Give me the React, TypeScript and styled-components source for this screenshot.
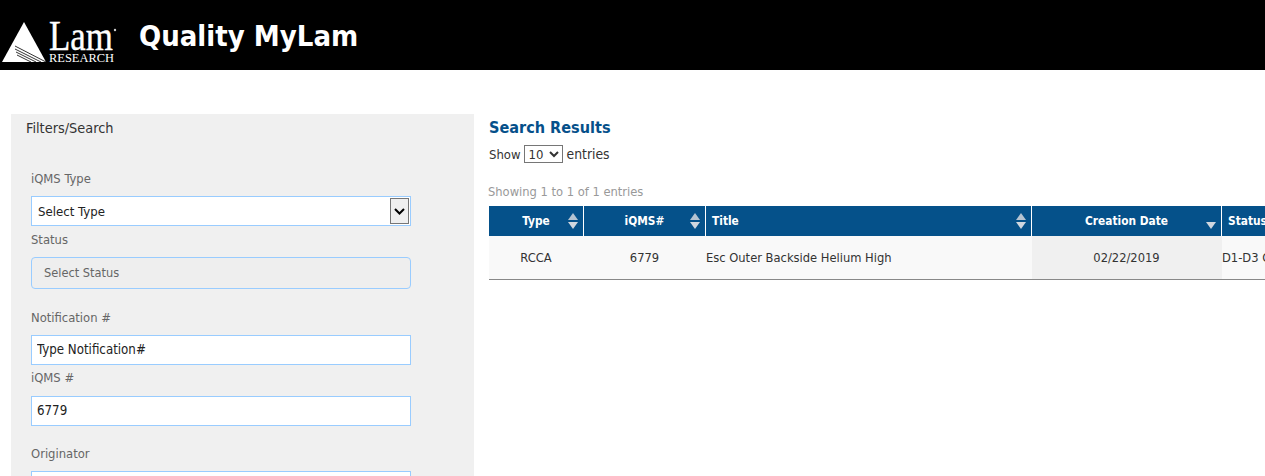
import React from 'react';
import styled, { createGlobalStyle } from 'styled-components';

const FONT = '"DejaVu Sans Condensed", "DejaVu Sans", sans-serif';

const GlobalStyle = createGlobalStyle`
  html, body {
    margin: 0;
    padding: 0;
    background: #fff;
    overflow: hidden;
    font-family: ${FONT};
  }
`;

const Page = styled.div`
  width: 1265px;
  height: 476px;
  overflow: hidden;
`;

const Header = styled.header`
  height: 70px;
  background: #000;
  display: flex;
  align-items: flex-start;
`;

const Logo = styled.svg`
  width: 118px;
  height: 70px;
  flex: none;
`;

const AppTitle = styled.h1`
  margin: 18px 0 0 21px;
  font-size: 29px;
  line-height: 36px;
  font-weight: 700;
  color: #fff;
  white-space: nowrap;
`;

const Main = styled.main`
  display: flex;
  align-items: flex-start;
  padding: 44px 0 0 11px;
`;

const Sidebar = styled.aside`
  width: 463px;
  height: 362px;
  flex: none;
  background: #f0f0f0;
  padding: 6px 0 0 20px;
  box-sizing: border-box;
`;

const SidebarTitle = styled.div`
  margin-left: -5px;
  font-size: 14.4px;
  line-height: 16px;
  color: #333;
  margin-bottom: 35px;
`;

const Label = styled.label<{ $top?: number }>`
  display: block;
  margin-top: ${(p) => p.$top ?? 0}px;
  font-size: 12.9px;
  line-height: 16px;
  color: #666;
`;

const fieldBorder = '1px solid #99ccff';

const SelectBox = styled.div`
  width: 380px;
  height: 30px;
  margin-top: 9px;
  box-sizing: border-box;
  border: ${fieldBorder};
  background: #fff;
  display: flex;
  align-items: center;
  justify-content: space-between;
  padding: 0 1px 0 6px;
  font-size: 13.1px;
  color: #222;
`;

const ArrowButton = styled.span`
  width: 19px;
  height: 26px;
  box-sizing: border-box;
  border: 1px solid #767676;
  background: #efefef;
  display: flex;
  align-items: center;
  justify-content: center;
`;

const DisabledBox = styled.div`
  width: 380px;
  height: 32px;
  margin-top: 9px;
  box-sizing: border-box;
  border: ${fieldBorder};
  border-radius: 4px;
  background: #eee;
  padding: 0 0 2px 12px;
  display: flex;
  align-items: center;
  font-size: 12.7px;
  color: #666;
`;

const TextField = styled.input<{ $top?: number }>`
  display: block;
  width: 380px;
  height: 30px;
  margin-top: ${(p) => p.$top ?? 10}px;
  box-sizing: border-box;
  border: ${fieldBorder};
  border-radius: 0;
  outline: none;
  background: #fff;
  padding: 0 5px 2px;
  font-family: ${FONT};
  font-size: 13.2px;
  color: #222;
`;

const Results = styled.section`
  margin-left: 15px;
  flex: none;
  width: 900px;
`;

const ResultsTitle = styled.h2`
  margin: 4px 0 0;
  font-size: 16.1px;
  line-height: 20px;
  font-weight: 700;
  color: #05508a;
`;

const EntriesRow = styled.div`
  margin-top: 7px;
  height: 18px;
  display: flex;
  align-items: center;
  gap: 3px;
  font-size: 13px;
  color: #333;
`;

const EntriesSelect = styled.select`
  width: 39px;
  height: 18px;
  margin-right: 1px;
  box-sizing: border-box;
  padding: 0;
  border: 1px solid #767676;
  background: #fff;
  font-family: ${FONT};
  font-size: 13px;
  color: #333;
`;

const EntriesWord = styled.span`
  font-size: 13.8px;
`;

const Info = styled.div`
  margin-top: 21px;
  margin-left: -1px;
  font-size: 12.8px;
  line-height: 16px;
  color: #999;
`;

const Table = styled.div`
  margin-top: 6px;
  display: grid;
  grid-template-columns: 94px 1px 121px 1px 325px 1px 189px 1px 200px;
`;

const HeadCell = styled.div<{ $align?: string }>`
  height: 30px;
  background: #05518a;
  color: #fff;
  font-size: 11.8px;
  font-weight: 700;
  display: flex;
  align-items: center;
  position: relative;
  justify-content: ${(p) => p.$align ?? 'center'};
  padding-left: ${(p) => (p.$align ? '6px' : '0')};
  box-sizing: border-box;
`;

const HeadGap = styled.div`
  background: #fff;
`;

const SortIcon = styled.svg`
  position: absolute;
  right: 5px;
  top: 7px;
  width: 10px;
  height: 16px;
`;

const BodyCell = styled.div<{ $align?: string; $sorted?: boolean }>`
  height: 44px;
  box-sizing: border-box;
  border-bottom: 1px solid #888;
  background: ${(p) => (p.$sorted ? '#f0f0f0' : '#f9f9f9')};
  font-size: 12.8px;
  color: #333;
  display: flex;
  align-items: center;
  justify-content: ${(p) => p.$align ?? 'center'};
  white-space: nowrap;
  overflow: hidden;
`;

function LamLogo() {
  return (
    <Logo viewBox="0 0 118 70">
      <polygon points="24,22 46,62 2,62" fill="#fff" />
      <g stroke="#000" strokeWidth="0.8">
        <line x1="15" y1="46" x2="46" y2="62" />
        <line x1="15" y1="49" x2="41" y2="62" />
        <line x1="16" y1="52" x2="36" y2="62" />
        <line x1="17" y1="55" x2="31" y2="62" />
      </g>
      <text
        x="49"
        y="50"
        fill="#fff"
        stroke="#fff"
        strokeWidth="0.4"
        fontFamily='"Liberation Serif", serif'
        fontSize="42"
        textLength="64"
        lengthAdjust="spacingAndGlyphs"
      >
        Lam
      </text>
      <circle cx="115" cy="30" r="1.2" fill="#ccc" />
      <text
        x="49"
        y="62"
        fill="#fff"
        fontFamily='"Liberation Serif", serif'
        fontSize="13"
        textLength="65"
        lengthAdjust="spacingAndGlyphs"
      >
        RESEARCH
      </text>
    </Logo>
  );
}

function Sort({ up = true }: { up?: boolean }) {
  return (
    <SortIcon viewBox="0 0 10 16">
      {up && <polygon points="5,0 10,7 0,7" fill="#b5c4d2" />}
      <polygon points="0,9 10,9 5,16" fill="#d0d7df" />
    </SortIcon>
  );
}

function Chevron() {
  return (
    <svg width="11" height="7" viewBox="0 0 11 7">
      <path d="M1 1l4.5 4.5L10 1" fill="none" stroke="#000" strokeWidth="2" />
    </svg>
  );
}

export default function App() {
  return (
    <Page>
      <GlobalStyle />
      <Header>
        <LamLogo />
        <AppTitle>Quality MyLam</AppTitle>
      </Header>
      <Main>
        <Sidebar>
          <SidebarTitle>Filters/Search</SidebarTitle>
          <Label>iQMS Type</Label>
          <SelectBox>
            Select Type
            <ArrowButton>
              <Chevron />
            </ArrowButton>
          </SelectBox>
          <Label $top={6}>Status</Label>
          <DisabledBox>Select Status</DisabledBox>
          <Label $top={21}>Notification #</Label>
          <TextField readOnly value="Type Notification#" $top={9} />
          <Label $top={5}>iQMS #</Label>
          <TextField readOnly value="6779" />
          <Label $top={20}>Originator</Label>
          <TextField readOnly value="" $top={9} />
        </Sidebar>
        <Results>
          <ResultsTitle>Search Results</ResultsTitle>
          <EntriesRow>
            Show
            <EntriesSelect defaultValue="10">
              <option>10</option>
              <option>25</option>
            </EntriesSelect>
            <EntriesWord>entries</EntriesWord>
          </EntriesRow>
          <Info>Showing 1 to 1 of 1 entries</Info>
          <Table>
            <HeadCell>
              Type
              <Sort />
            </HeadCell>
            <HeadGap />
            <HeadCell>
              iQMS#
              <Sort />
            </HeadCell>
            <HeadGap />
            <HeadCell $align="flex-start">
              Title
              <Sort />
            </HeadCell>
            <HeadGap />
            <HeadCell>
              Creation Date
              <Sort up={false} />
            </HeadCell>
            <HeadGap />
            <HeadCell $align="flex-start">Status</HeadCell>

            <BodyCell>RCCA</BodyCell>
            <BodyCell />
            <BodyCell>6779</BodyCell>
            <BodyCell />
            <BodyCell $align="flex-start">Esc Outer Backside Helium High</BodyCell>
            <BodyCell />
            <BodyCell $sorted>02/22/2019</BodyCell>
            <BodyCell $sorted />
            <BodyCell $align="flex-start">D1-D3 Containment</BodyCell>
          </Table>
        </Results>
      </Main>
    </Page>
  );
}
